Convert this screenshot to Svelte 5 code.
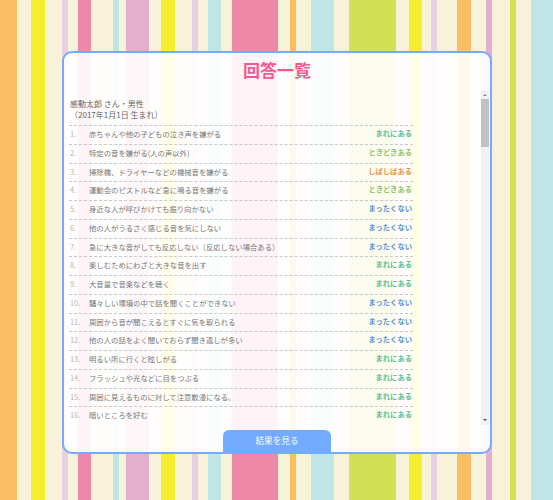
<script>
	const person = '感動太郎 さん・男性';
	const birth = '（2017年1月1日 生まれ）';

	const labels = {
		rare: 'まれにある',
		some: 'ときどきある',
		often: 'しばしばある',
		never: 'まったくない'
	};

	const answers = [
		['赤ちゃんや他の子どもの泣き声を嫌がる', 'rare'],
		['特定の音を嫌がる(人の声以外)', 'some'],
		['掃除機、ドライヤーなどの機械音を嫌がる', 'often'],
		['運動会のピストルなど急に鳴る音を嫌がる', 'some'],
		['身近な人が呼びかけても振り向かない', 'never'],
		['他の人がうるさく感じる音を気にしない', 'never'],
		['急に大きな音がしても反応しない（反応しない場合ある）', 'never'],
		['楽しむためにわざと大きな音を出す', 'rare'],
		['大音量で音楽などを聴く', 'rare'],
		['騒々しい環境の中で話を聞くことができない', 'never'],
		['周囲から音が聞こえるとすぐに気を取られる', 'never'],
		['他の人の話をよく聞いておらず聞き返しが多い', 'never'],
		['明るい所に行くと眩しがる', 'rare'],
		['フラッシュや光などに目をつぶる', 'rare'],
		['周囲に見えるものに対して注意散漫になる。', 'rare'],
		['暗いところを好む', 'rare']
	];
</script>

<main class="card">
	<h1>回答一覧</h1>
	<div class="body">
		<div class="scroller">
			<p class="who">{person}<br />{birth}</p>
			<ol>
				{#each answers as [question, level], i}
					<li>
						<span class="num">{i + 1}.</span>
						<span class="question">{question}</span>
						<span class="level {level}">{labels[level]}</span>
					</li>
				{/each}
			</ol>
		</div>
		<div class="scrollbar">
			<svg width="8" height="9" viewBox="0 0 8 9"><path d="M4 4 L6 6 L2 6 Z" fill="#888" /></svg>
			<div class="thumb"></div>
			<div class="rest"></div>
			<svg width="8" height="9" viewBox="0 0 8 9"><path d="M2 3 L6 3 L4 5 Z" fill="#555" /></svg>
		</div>
	</div>
	<button type="button">結果を見る</button>
</main>

<style>
	:global(html) {
		height: 100%;
	}

	:global(body) {
		height: 500px;
		overflow: hidden;
		font-family: "Noto Sans CJK JP", "Noto Sans", sans-serif;
		background: linear-gradient(to right,
			#fbbf63 0 17px, #f9f2da 17px 31px, #f5ee30 31px 45px, #f9f2da 45px 62px,
			#e8cfe3 62px 68px, #f9f2da 68px 78px, #ee88a9 78px 91px, #f9f2da 91px 113px,
			#bfe5e6 113px 119px, #f9f2da 119px 126px, #e4aecd 126px 149px, #f9f2da 149px 161px,
			#f5ee30 161px 175px, #f9f2da 175px 192px, #e8cfe3 192px 198px, #f9f2da 198px 208px,
			#bfe5e6 208px 221px, #f9f2da 221px 232px, #ee88a9 232px 278px, #f9f2da 278px 290px,
			#fbbf63 290px 296px, #f9f2da 296px 311px, #bfe5e6 311px 334px, #f9f2da 334px 349px,
			#d2e056 349px 396px, #f9f2da 396px 409px, #f5ee30 409px 422px, #f9f2da 422px 431px,
			#e8cfe3 431px 437px, #f9f2da 437px 457px, #fbbf63 457px 471px, #f9f2da 471px 486px,
			#e4aecd 486px 492px, #f9f2da 492px 510px, #d2e056 510px 516px, #f9f2da 516px 531px,
			#bfe5e6 531px 553px);
	}

	.card {
		box-sizing: border-box;
		width: 430px;
		height: 403px;
		margin: 51px 0 0 62px;
		border: 2px solid #72abff;
		border-radius: 10px;
		background: rgba(255, 255, 255, 0.9);
		display: flex;
		flex-direction: column;
		align-items: center;
	}

	h1 {
		height: 37px;
		margin: 0;
		font-size: 17px;
		font-weight: 700;
		line-height: 33px;
		color: #f8588f;
	}

	.body {
		align-self: stretch;
		height: 335px;
		margin-right: 1px;
		display: flex;
	}

	.scroller {
		flex: 1;
		min-width: 0;
		padding: 0 68px 0 5px;
		overflow: hidden;
		color: #777;
		font-size: 7.35px;
	}

	.scrollbar {
		width: 8px;
		display: flex;
		flex-direction: column;
		background: #f1f1f1;
	}

	.scrollbar svg {
		display: block;
		flex: none;
	}

	.thumb {
		height: 48px;
		background: #c1c1c1;
	}

	.rest {
		flex: 1;
	}

	.who {
		margin: 8px 0 0;
		padding: 0 0 5px 1px;
		font-size: 8px;
		line-height: 11px;
		color: #666;
	}

	ol {
		list-style: none;
		margin: 0;
		padding: 0;
	}

	li {
		box-sizing: border-box;
		height: 18.76px;
		padding-bottom: 2px;
		display: flex;
		align-items: center;
		border-top: 1px dashed #c8c8c8;
		line-height: 1;
	}

	.num {
		box-sizing: border-box;
		width: 20px;
		padding-left: 1px;
		color: #b5b5b5;
	}

	.question {
		flex: 1;
	}

	.level {
		font-weight: 700;
		font-size: 7.3px;
		padding-right: 1px;
	}

	.rare { color: #5dc096; }
	.some { color: #93c46c; }
	.often { color: #e39a4d; }
	.never { color: #5d95cf; }

	button {
		width: 108px;
		height: 22px;
		margin-top: auto;
		padding: 0 0 2px;
		border: 0;
		border-radius: 6px 6px 0 0;
		background: #72abff;
		color: #fff;
		font: inherit;
		font-size: 8.6px;
	}
</style>
